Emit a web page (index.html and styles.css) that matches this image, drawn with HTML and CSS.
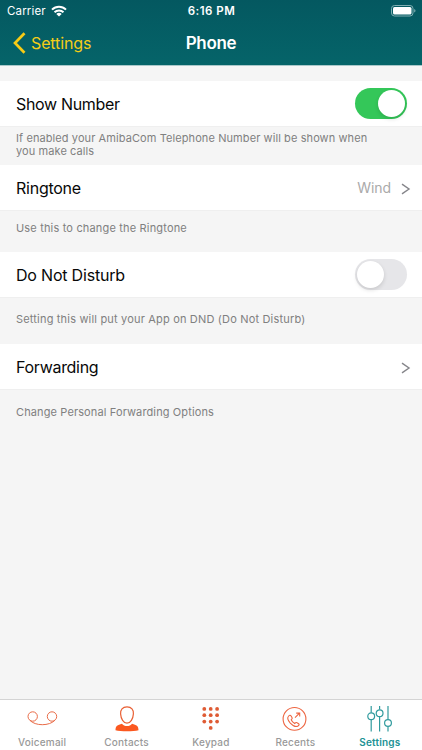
FILE: index.html
```html
<!DOCTYPE html>
<html lang="en">
<head>
<meta charset="utf-8">
<title>Phone</title>
<link rel="stylesheet" href="styles.css">
</head>
<body>
<header class="header">
  <div class="status">
    <div class="carrier"><span>Carrier</span>
      <svg width="16" height="12" viewBox="0 0 16 12" fill="none" stroke="#fff" stroke-width="2"><path d="M1 4.600C5 .7 11 .7 15 4.600M3.500 7.200c2.500-2.400 6.500-2.400 9 0"/><path d="M5.300 8.900Q8 6.700 10.700 8.900L8 11.600Z" fill="#fff" stroke="none"/></svg>
    </div>
    <span class="time">6:16 PM</span>
    <svg class="battery" width="25" height="12" viewBox="0 0 25 12"><rect x=".5" y=".5" width="21.500" height="10.500" rx="3" fill="none" stroke="#7faeb2"/><rect x="2" y="2" width="18.500" height="7.500" rx="1.500" fill="#fff"/><path d="M23.200 4v3.500q1.300-.5 1.300-1.750T23.200 4" fill="#7faeb2"/></svg>
  </div>
  <nav class="nav">
    <a class="back"><svg width="14" height="22" viewBox="0 0 14 22" fill="none" stroke="#f8cb15" stroke-width="2.700"><path d="M12.500 1.200 3 11 12.500 20.800"/></svg><span>Settings</span></a>
    <h1>Phone</h1>
  </nav>
</header>
<main class="content">
  <section class="row"><span class="label">Show Number</span><span class="switch on"><i></i></span></section>
  <p class="note number-note">If enabled your AmibaCom Telephone Number will be shown when<br>you make calls</p>
  <section class="row"><span class="label ringtone">Ringtone</span><span class="value">Wind</span><svg class="chevron" width="10" height="12" viewBox="0 0 10 12"><path d="m1 1.200 7 4.800-7 4.800"/></svg></section>
  <p class="note ring-note">Use this to change the Ringtone</p>
  <section class="row"><span class="label dnd">Do Not Disturb</span><span class="switch"><i></i></span></section>
  <p class="note dnd-note">Setting this will put your App on DND (Do Not Disturb)</p>
  <section class="row"><span class="label forwarding">Forwarding</span><svg class="chevron" width="10" height="12" viewBox="0 0 10 12"><path d="m1 1.200 7 4.800-7 4.800"/></svg></section>
  <p class="note forward-note">Change Personal Forwarding Options</p>
</main>
<footer class="tabs">
  <div class="tab"><svg width="32" height="28" viewBox="0 0 32 28" fill="none" stroke="#e96c48"><circle cx="6.700" cy="11.500" r="4.700"/><circle cx="26" cy="11.500" r="4.700"/><path d="M3.800 15.200C9 21.200 23.500 21.200 29 15.200"/></svg><span>Voicemail</span></div>
  <div class="tab"><svg width="28" height="28" viewBox="0 0 28 28"><path d="M2.500 25.200c0-4.500 2-5.200 6.500-6.500 2 3.200 8 3.200 10 0 4.500 1.300 6.500 2 6.500 6.500-5 1.400-18 1.400-23 0Z" fill="#fb5820"/><path d="M14 1.900c4.500 0 6.700 3 6.400 7-.3 4.800-2.900 9.300-6.400 9.300S7.900 13.700 7.600 8.900c-.3-4 1.900-7 6.400-7Z" fill="#fff" stroke="#e96034" stroke-width="1.200"/></svg><span>Contacts</span></div>
  <div class="tab"><svg width="20" height="28" viewBox="0 0 20 28" fill="#df5b34"><circle cx="3.300" cy="3.900" r="1.900"/><circle cx="9.700" cy="3.900" r="1.900"/><circle cx="16.100" cy="3.900" r="1.900"/><circle cx="3.300" cy="10.200" r="1.900"/><circle cx="9.700" cy="10.200" r="1.900"/><circle cx="16.100" cy="10.200" r="1.900"/><circle cx="3.300" cy="16.600" r="1.900"/><circle cx="9.700" cy="16.600" r="1.900"/><circle cx="16.100" cy="16.600" r="1.900"/><circle cx="9.700" cy="22.900" r="1.900"/></svg><span>Keypad</span></div>
  <div class="tab"><svg width="28" height="28" viewBox="0 .6 28 28" fill="none" stroke="#ed6541" stroke-width="1.100"><circle cx="13.500" cy="14.500" r="11.400"/><path d="M7.300 12.100c1.100-1.500 2.100-1.600 2.800-.5l1 1.800c.5 1-.5 1.500-.9 2 .7 1.700 1.800 2.800 3.500 3.700.7-.7 1.400-1.400 2.400-.7l1.500 1c1.100.8.300 1.500-.6 2.200-2.400 1.500-5.700-.8-7.700-2.900-1.900-2.200-3.500-4.700-2-6.600ZM14 13.300l4.500-4.500m-3.300-.1h3.500v3.500"/></svg><span>Recents</span></div>
  <div class="tab active"><svg width="28" height="28" viewBox="0 0 28 28" fill="none" stroke="#319b9e" stroke-width="1.200"><path d="M5.200 .9V7.800m0 7V26.500M13.600 .9v3.700m0 7.200V26.500M22 .9v13.800m0 7v4.800"/><circle cx="5.200" cy="11.300" r="3.400"/><circle cx="13.600" cy="8.200" r="3.400"/><circle cx="22" cy="18" r="3.400"/></svg><span>Settings</span></div>
</footer>
</body>
</html>
```
FILE: styles.css
```css
* { box-sizing: border-box; }
body { margin: 0; width: 422px; height: 750px; display: flex; flex-direction: column; overflow: hidden; background: #f5f5f5; color: #080808; font-family: Inter, sans-serif; }
.header { height: 65px; flex: none; background: linear-gradient(#045860, #056469); color: #fff; box-shadow: 0 1px #a9c8ca; }
.status { height: 22px; padding: 0 6px 0 7px; display: grid; grid-template-columns: 1fr auto 1fr; align-items: center; font-size: 11.5px; line-height: 22px; }
.carrier { display: flex; align-items: center; gap: 5px; letter-spacing: .15px; }
.time { font-weight: 600; letter-spacing: .5px; }
.battery { justify-self: end; }
.nav { height: 43px; display: grid; grid-template-columns: 1fr auto 1fr; align-items: center; }
.back { display: flex; align-items: center; gap: 5px; padding: 0 0 1px 12px; font-size: 16px; letter-spacing: -.12px; color: #f4cd17; }
h1 { margin: 0 0 1px; font-size: 17px; line-height: 22px; font-weight: 600; letter-spacing: -.3px; }
.content { flex: 1; padding-top: 16px; }
.row { height: 45px; padding: 0 11px 0 16px; display: flex; align-items: center; background: #fff; box-shadow: 0 1px #efefef; }
.label { margin-right: auto; font-size: 16px; line-height: 22px; letter-spacing: -.33px; }
.ringtone { letter-spacing: -.25px; }
.dnd { letter-spacing: -.2px; }
.forwarding { letter-spacing: -.3px; }
.value { margin-right: 10px; font-size: 14px; letter-spacing: -.1px; color: #aaa; }
.chevron { margin-top: 3px; fill: none; stroke: #85858a; stroke-width: 1.4; }
.switch { width: 52px; height: 31px; margin-right: 4px; padding: 2px; display: flex; border-radius: 16px; background: #e6e6e9; }
.switch i { width: 27px; height: 27px; border-radius: 50%; background: #fff; box-shadow: 0 2px 4px #0002; }
.switch.on { justify-content: flex-end; background: #34c759; }
.note { margin: 0; padding: 0 16px; display: flex; align-items: center; font-size: 11px; line-height: 13px; letter-spacing: .12px; color: #808080; white-space: nowrap; }
.number-note { height: 39px; display: block; padding-top: 6px; letter-spacing: .09px; }
.ring-note { height: 42px; padding-bottom: 6px; letter-spacing: .17px; }
.dnd-note { height: 47px; padding-bottom: 3px; letter-spacing: .18px; }
.forward-note { height: 46px; }
.tabs { height: 51px; flex: none; display: grid; grid-template-columns: repeat(5, 1fr); background: #fff; border-top: 1px solid #d4d4d4; }
.tab { padding-top: 5px; display: flex; flex-direction: column; align-items: center; font-size: 10px; line-height: 13px; font-weight: 500; letter-spacing: .2px; color: #999; }
.tab span { margin-top: 3px; }
.active { color: #219194; font-weight: 600; }
```
